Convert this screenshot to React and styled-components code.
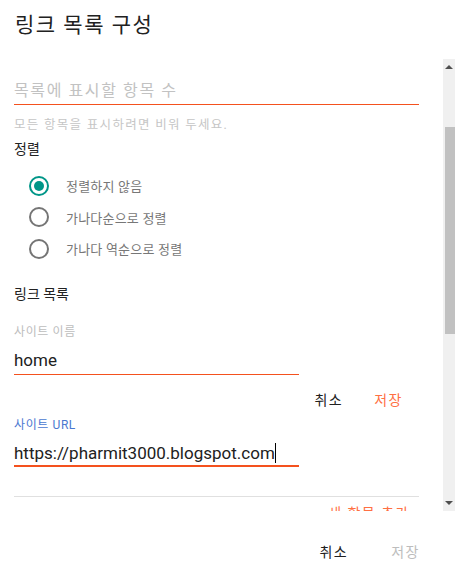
import React from 'react';
import styled, { createGlobalStyle } from 'styled-components';

const GlobalStyle = createGlobalStyle`
  html, body {
    margin: 0;
    padding: 0;
    background: #fff;
  }
  body {
    font-family: Roboto, "Noto Sans CJK KR", sans-serif;
  }
`;

const Dialog = styled.div`
  width: 455px;
  height: 568px;
  background: #fff;
  display: flex;
  flex-direction: column;
  overflow: hidden;
`;

const Title = styled.h1`
  margin: 0;
  height: 59px;
  padding: 10px 15px 0;
  box-sizing: border-box;
  font-size: 21px;
  font-weight: 400;
  letter-spacing: 1.5px;
  color: #212121;
  line-height: 30px;
`;

const ScrollArea = styled.div`
  height: 452px;
  display: flex;
`;

const Content = styled.div`
  flex: 1;
  overflow: hidden;
  padding: 0 24px 0 14px;
`;

const Scrollbar = styled.div`
  width: 12px;
  background: #f0f0f0;
  display: flex;
  flex-direction: column;
  align-items: center;
`;

const Arrow = styled.div`
  width: 0;
  height: 0;
  margin: ${p => (p.down ? '0 0 6px' : '6px 0 0')};
  border-left: 4px solid transparent;
  border-right: 4px solid transparent;
  ${p => (p.down ? 'border-top: 4px solid #505050;' : 'border-bottom: 4px solid #505050;')}
`;

const Track = styled.div`
  flex: 1;
  width: 100%;
  padding-top: 58px;
  box-sizing: border-box;
`;

const Thumb = styled.div`
  margin-left: 2px;
  width: 10px;
  height: 207px;
  background: #c1c1c1;
`;

const Field = styled.div`
  width: ${p => p.width || '405px'};
  padding-top: ${p => p.top || '0'};
`;

const Input = styled.div`
  height: ${p => (p.placeholder ? '26px' : p.focused ? '24px' : '26px')};
  line-height: ${p => (p.placeholder ? '26px' : '24px')};
  font-size: ${p => (p.placeholder ? '16px' : '17px')};
  color: ${p => (p.placeholder ? '#c2c2c2' : '#212121')};
  letter-spacing: ${p => (p.placeholder ? '1.6px' : '0')};
  border-bottom: ${p => (p.focused ? '2px' : '1px')} solid #f4511e;
  white-space: nowrap;
`;

const Caret = styled.span`
  display: inline-block;
  width: 1px;
  height: 20px;
  background: #000;
  vertical-align: -4px;
`;

const Helper = styled.div`
  margin-top: 9px;
  font-size: 12.5px;
  letter-spacing: 1.3px;
  color: #c6c6c6;
`;

const SectionLabel = styled.div`
  margin-top: ${p => p.top || '0'};
  font-size: 14px;
  color: #222;
  line-height: 20px;
`;

const RadioGroup = styled.div`
  padding: 16px 0 0 15px;
  display: flex;
  flex-direction: column;
  gap: 10.5px;
`;

const RadioRow = styled.label`
  display: flex;
  align-items: center;
  gap: 17px;
  height: 21px;
`;

const RadioCircle = styled.span`
  width: 16px;
  height: 16px;
  border-radius: 50%;
  border: 2px solid ${p => (p.checked ? '#009688' : '#757575')};
  display: flex;
  align-items: center;
  justify-content: center;
  &::after {
    content: '';
    width: 10px;
    height: 10px;
    border-radius: 50%;
    background: ${p => (p.checked ? '#009688' : 'transparent')};
  }
`;

const RadioText = styled.span`
  font-size: 13px;
  letter-spacing: 0.2px;
  color: #777;
`;

const SmallLabel = styled.div`
  margin-top: ${p => p.top || '0'};
  font-size: 12px;
  letter-spacing: 0.6px;
  line-height: 16px;
  color: ${p => p.color || '#bdbdbd'};
`;

const InlineActions = styled.div`
  width: 389px;
  display: flex;
  justify-content: flex-end;
  gap: 31px;
  margin-top: 15px;
  font-size: 14px;
  line-height: 20px;
`;

const TextButton = styled.span`
  color: ${p => p.color || '#212121'};
  letter-spacing: 1.5px;
`;

const Divider = styled.div`
  margin-top: 29px;
  height: 1px;
  background: #e0e0e0;
`;

const AddRow = styled.div`
  padding-right: 9px;
  margin-top: 5px;
  text-align: right;
  font-size: 14px;
  letter-spacing: 1.5px;
  color: #ff7043;
`;

const Footer = styled.div`
  flex: 1;
  display: flex;
  justify-content: flex-end;
  align-items: center;
  gap: 43px;
  padding: 22px 35px 0 0;
  font-size: 14px;
`;

export default function App() {
  return (
    <>
      <GlobalStyle />
      <Dialog>
        <Title>링크 목록 구성</Title>
        <ScrollArea>
          <Content>
            <Field top="19px">
              <Input placeholder>목록에 표시할 항목 수</Input>
            </Field>
            <Helper>모든 항목을 표시하려면 비워 두세요.</Helper>
            <SectionLabel top="6px">정렬</SectionLabel>
            <RadioGroup>
              <RadioRow>
                <RadioCircle checked />
                <RadioText>정렬하지 않음</RadioText>
              </RadioRow>
              <RadioRow>
                <RadioCircle />
                <RadioText>가나다순으로 정렬</RadioText>
              </RadioRow>
              <RadioRow>
                <RadioCircle />
                <RadioText>가나다 역순으로 정렬</RadioText>
              </RadioRow>
            </RadioGroup>
            <SectionLabel top="25px">링크 목록</SectionLabel>
            <SmallLabel top="20px">사이트 이름</SmallLabel>
            <Field width="285px" top="8px">
              <Input>home</Input>
            </Field>
            <InlineActions>
              <TextButton>취소</TextButton>
              <TextButton color="#ff7043">저장</TextButton>
            </InlineActions>
            <SmallLabel top="7px" color="#4a78d0">사이트 URL</SmallLabel>
            <Field width="285px" top="8px">
              <Input focused>
                https://pharmit3000.blogspot.com<Caret />
              </Input>
            </Field>
            <Divider />
            <AddRow>새 항목 추가</AddRow>
          </Content>
          <Scrollbar>
            <Arrow />
            <Track>
              <Thumb />
            </Track>
            <Arrow down />
          </Scrollbar>
        </ScrollArea>
        <Footer>
          <TextButton>취소</TextButton>
          <TextButton color="#bdbdbd">저장</TextButton>
        </Footer>
      </Dialog>
    </>
  );
}
